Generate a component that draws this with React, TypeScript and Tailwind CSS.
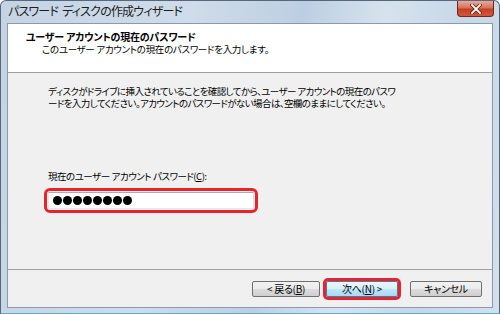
import React from "react";

const jp = {
  fontFamily: '"Noto Sans CJK JP", "Noto Sans", sans-serif',
  fontFeatureSettings: '"palt"',
} as React.CSSProperties;

function Btn({
  children,
  primary,
  w,
}: {
  children: React.ReactNode;
  primary?: boolean;
  w: string;
}) {
  return (
    <div
      className={`${w} h-[16px] flex items-center justify-center rounded-[2px] border text-[10px] leading-[12px] tracking-[-0.3px] text-black ${
        primary
          ? "border-[#3c7fb1] bg-[linear-gradient(#eaf6fd_0%,#d9f0fc_50%,#bee6fd_51%,#a7d9f5_100%)]"
          : "border-[#707070] bg-[linear-gradient(#f2f2f2_0%,#ebebeb_50%,#dddddd_51%,#cfcfcf_100%)]"
      }`}
    >
      {children}
    </div>
  );
}

export default function App() {
  return (
    <div
      className="w-[500px] h-[314px] flex flex-col border border-[#56687a] border-b-[#5fa9cf] rounded-t-[6px] bg-[linear-gradient(100deg,#c4d4e4_0%,#cfdce9_35%,#bccfe2_55%,#d6e3ee_70%,#c6d7e7_85%,#d3e0ec_100%)] overflow-hidden"
      style={jp}
    >
      {/* title bar */}
      <div className="h-[21px] flex items-start justify-between pl-[7px] pr-[5px]">
        <div className="pt-[3px] text-[12px] leading-[14px] text-[#1c1c1c] tracking-[-0.8px]">
          パスワード<span className="ml-[4px]">ディスクの作成ウィザード</span>
        </div>
        <div className="w-[37px] h-[16px] rounded-b-[4px] border border-t-0 border-[#6b2b22] bg-[linear-gradient(#e9aa9a_0%,#d7725c_45%,#c43f26_55%,#d6563b_100%)] flex items-center justify-center">
          <svg width="12" height="10" viewBox="0 0 12 10">
            <path
              d="M2 1 L10 9 M10 1 L2 9"
              stroke="#5a2018"
              strokeWidth="3.4"
              strokeLinecap="square"
            />
            <path
              d="M2 1 L10 9 M10 1 L2 9"
              stroke="#ffffff"
              strokeWidth="1.8"
              strokeLinecap="square"
            />
          </svg>
        </div>
      </div>

      {/* content */}
      <div className="mx-[6px] mt-[1px] mb-[5px] flex-1 flex flex-col border border-[#8a9aac] bg-[#f0f0f0]">
        {/* header */}
        <div className="h-[49px] bg-white border-b border-[#a0a0a0] pt-[7px] flex flex-col">
          <div className="pl-[18px] text-[10px] leading-[12px] font-bold text-black tracking-[-0.2px]">
            ユーザー アカウントの現在のパスワード
          </div>
          <div className="pl-[34px] text-[9.5px] leading-[12px] text-black tracking-[-0.3px]">
            このユーザー アカウントの現在のパスワードを入力します。
          </div>
        </div>

        {/* body */}
        <div className="h-[197px] border-b border-[#a0a0a0] pt-[12px] pl-[40px] flex flex-col">
          <div className="text-[9.5px] leading-[12px] text-black tracking-[-0.6px]">
            ディスクがドライブに挿入されていることを確認してから、ユーザー アカウントの現在のパスワ
            <br />
            ードを入力してください。アカウントのパスワードがない場合は、空欄のままにしてください。
          </div>
          <div className="mt-[61px] text-[9.5px] leading-[12px] text-black tracking-[-0.5px]">
            現在のユーザー<span className="ml-[2px]">アカウント</span>
            <span className="ml-[2px]">パスワード(</span>
            <span className="underline">C</span>):
          </div>
          <div className="mt-[6px] -ml-[4px] w-[214px] border-[3px] border-[#e8232b] rounded-[6px] p-[1px]">
            <div className="h-[17px] bg-white border border-[#abadb3] border-b-[#e3e9ef] border-r-[#dbdfe6] border-l-[#e2e3ea] flex items-center pl-[4px] gap-[1px]">
              {Array.from({ length: 8 }).map((_, i) => (
                <div key={i} className="w-[9px] h-[9px] rounded-full bg-black" />
              ))}
            </div>
          </div>
        </div>

        {/* footer */}
        <div className="flex-1 flex items-center justify-end pr-[10px]">
          <Btn w="w-[68px]">
            &lt; 戻る(<span className="underline">B</span>)
          </Btn>
          <div className="ml-[3px] border-[3px] border-[#e8232b] rounded-[5px]">
            <Btn w="w-[72px]" primary>
              次へ(<span className="underline">N</span>) &gt;
            </Btn>
          </div>
          <div className="ml-[9px]">
            <Btn w="w-[72px]">キャンセル</Btn>
          </div>
        </div>
      </div>
    </div>
  );
}
